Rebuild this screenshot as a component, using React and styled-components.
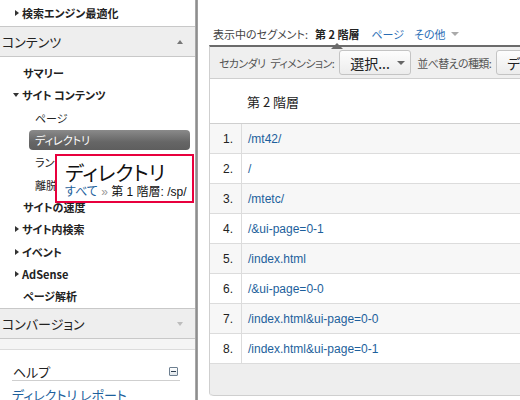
import React from "react";
import styled, { createGlobalStyle, css } from "styled-components";

const GlobalStyle = createGlobalStyle`
  html, body { margin: 0; padding: 0; background: #fff; }
  body {
    width: 520px; height: 400px; overflow: hidden;
    font-family: "Noto Sans CJK JP", "Liberation Sans", sans-serif;
    font-feature-settings: "palt";
    color: #222;
  }
`;

const Page = styled.div`
  display: flex;
  width: 520px;
  height: 400px;
  overflow: hidden;
`;

const Sidebar = styled.div`
  position: relative;
  width: 195px;
  flex-shrink: 0;
  overflow: hidden;
`;

const Splitter = styled.div`
  width: 3px;
  flex-shrink: 0;
  background: linear-gradient(to right, #b5b5b5, #8e8e8e, #a8a8a8);
`;

const TopItem = styled.div`
  box-sizing: border-box;
  height: 27px;
  border-bottom: 1px solid #c8c8c8;
  display: flex;
  align-items: center;
  padding-left: 15px;
  font-size: 11px;
  font-weight: 700;
  line-height: 14px;
`;

const Tri = styled.span`
  display: inline-block;
  width: 0;
  height: 0;
  margin-right: 3px;
  ${(p) =>
    p.$dir === "down"
      ? css`
          border-left: 3px solid transparent;
          border-right: 3px solid transparent;
          border-top: 4px solid #333;
        `
      : css`
          border-top: 3px solid transparent;
          border-bottom: 3px solid transparent;
          border-left: 4px solid #333;
        `}
`;

const SectionHeader = styled.div`
  box-sizing: border-box;
  height: ${(p) => (p.$top ? 31 : 30)}px;
  background: #eeeeee;
  border-bottom: 1px solid #c8c8c8;
  ${(p) => p.$top && css`border-top: 1px solid #c8c8c8;`}
  display: flex;
  align-items: center;
  justify-content: space-between;
  padding: 0 12px 0 2px;
  font-size: 13px;
  color: #222;
`;

const HeaderArrow = styled.span`
  width: 0;
  height: 0;
  border-left: 3px solid transparent;
  border-right: 3px solid transparent;
  ${(p) =>
    p.$up
      ? css`border-bottom: 4px solid #777;`
      : css`border-top: 4px solid #bdbdbd;`}
`;

const NavList = styled.div`
  padding: 5px 0 1px;
`;

const Item = styled.div`
  height: 22.3px;
  display: flex;
  align-items: center;
  padding-left: ${(p) => p.$indent}px;
  font-size: 11px;
  line-height: 14px;
  font-weight: ${(p) => (p.$bold ? 700 : 400)};
  color: #222;
  white-space: nowrap;
`;

const SelectedLabel = styled.span`
  box-sizing: border-box;
  width: 161px;
  height: 20px;
  display: flex;
  align-items: center;
  padding-left: 6px;
  border-radius: 4px;
  background: linear-gradient(to bottom, #8a8a8a, #666 60%, #5e5e5e);
  color: #fff;
`;

const Spacer = styled.div`
  box-sizing: border-box;
  height: 11px;
  background: #f5f5f5;
  border-bottom: 1px solid #dcdcdc;
`;

const Help = styled.div`
  padding: 12px 15px 0 12px;
`;

const HelpTitle = styled.div`
  box-sizing: border-box;
  height: 19px;
  border-bottom: 1px solid #cfcfcf;
  display: flex;
  align-items: center;
  justify-content: space-between;
  padding-left: 1px;
  font-size: 13px;
  color: #222;
`;

const MinusBox = styled.span`
  box-sizing: border-box;
  width: 9px;
  height: 9px;
  margin-right: 2px;
  border: 1px solid #6d7f90;
  border-radius: 1px;
  background: linear-gradient(#fff, #dfe5ea);
  display: flex;
  align-items: center;
  justify-content: center;
  &::after {
    content: "";
    width: 5px;
    height: 1px;
    background: #2c3e50;
  }
`;

const HelpLink = styled.div`
  margin-top: 5px;
  font-size: 13px;
  line-height: 18px;
  color: #1d5f9c;
  white-space: nowrap;
`;

const Popup = styled.div`
  position: absolute;
  left: 55px;
  top: 154px;
  width: 139px;
  height: 49px;
  box-sizing: border-box;
  border: 2px solid #e8003d;
  background: #fff;
  padding: 5px 8px 0;
`;

const PopupTitle = styled.div`
  font-size: 20px;
  line-height: 24px;
  color: #111;
`;

const PopupPath = styled.div`
  font-size: 12px;
  line-height: 15px;
  color: #111;
  white-space: nowrap;
  font-family: "Liberation Sans", "Noto Sans CJK JP", sans-serif;
`;

const Blue = styled.span`
  color: ${(p) => p.$color || "#1d5f9c"};
`;

const Main = styled.div`
  flex: 1;
  min-width: 0;
  padding-left: 11px;
  overflow: hidden;
`;

const SegmentBar = styled.div`
  height: 45px;
  box-sizing: border-box;
  padding: 23px 0 0 4px;
  display: flex;
  align-items: center;
  font-size: 11px;
  line-height: 16px;
  color: #444;
  white-space: nowrap;
`;

const SegLabel = styled.span`
  margin-right: 7px;
`;

const SegActive = styled.span`
  position: relative;
  font-weight: 700;
  color: #222;
  margin-right: 12px;
  &::after {
    content: "";
    position: absolute;
    left: 50%;
    margin-left: -6px;
    bottom: -7px;
    border-left: 6px solid transparent;
    border-right: 6px solid transparent;
    border-bottom: 6px solid #6b6b6b;
  }
`;

const SegLink = styled.span`
  color: #2a6db5;
  margin-right: 10px;
  display: inline-flex;
  align-items: center;
`;

const SmallDown = styled.span`
  margin-left: 5px;
  width: 0;
  height: 0;
  border-left: 4px solid transparent;
  border-right: 4px solid transparent;
  border-top: 4px solid #aaa;
`;

const Toolbar = styled.div`
  box-sizing: border-box;
  height: 34px;
  width: 340px;
  border-top: 2px solid #6b6b6b;
  border-left: 1px solid #cfcfcf;
  border-bottom: 1px solid #cfcfcf;
  background: #efefef;
  display: flex;
  align-items: center;
  padding-left: 9px;
  font-size: 11px;
  color: #555;
  white-space: nowrap;
`;

const ToolLabel = styled.span`
  margin-right: 5px;
  letter-spacing: -0.6px;
  word-spacing: 3px;
`;

const SelectButton = styled.span`
  box-sizing: border-box;
  flex-shrink: 0;
  height: 25px;
  width: ${(p) => p.$w}px;
  border: 1px solid #c4c4c4;
  border-radius: 3px;
  background: linear-gradient(#fdfdfd, #ececec);
  display: flex;
  align-items: center;
  padding-left: 10px;
  margin-right: 6px;
  font-size: 14px;
  color: #222;
`;

const BtnArrow = styled.span`
  margin-left: 7px;
  width: 0;
  height: 0;
  border-left: 4px solid transparent;
  border-right: 4px solid transparent;
  border-top: 4px solid #666;
`;

const Table = styled.div`
  width: 340px;
  border-left: 1px solid #cfcfcf;
  border-bottom-left-radius: 4px;
  overflow: hidden;
`;

const HeadRow = styled.div`
  box-sizing: border-box;
  height: 45px;
  border-bottom: 1px solid #cfcfcf;
  display: flex;
  align-items: center;
  padding-left: 37px;
  font-size: 13px;
  color: #222;
`;

const Row = styled.div`
  box-sizing: border-box;
  height: 30px;
  display: grid;
  grid-template-columns: 32px 1fr;
  border-bottom: 1px solid #dcdcdc;
  background: ${(p) => (p.$odd ? "#f7f7f7" : "#fff")};
  font-family: "Liberation Sans", sans-serif;
  font-size: 12px;
`;

const NumCell = styled.div`
  border-right: 1px solid #dcdcdc;
  display: flex;
  align-items: center;
  justify-content: flex-end;
  padding-right: 8px;
  color: #222;
`;

const LinkCell = styled.div`
  display: flex;
  align-items: center;
  padding-left: 6px;
  color: #1d5f9c;
  white-space: nowrap;
`;

const Footer = styled.div`
  box-sizing: border-box;
  height: 32px;
  background: #eeeeee;
  border-bottom: 1px solid #cfcfcf;
  border-bottom-left-radius: 4px;
`;

const rows = [
  "/mt42/",
  "/",
  "/mtetc/",
  "/&ui-page=0-1",
  "/index.html",
  "/&ui-page=0-0",
  "/index.html&ui-page=0-0",
  "/index.html&ui-page=0-1",
];

const nav = [
  { t: "サマリー", indent: 23, bold: true },
  { t: "サイト コンテンツ", indent: 13, bold: true, tri: "down" },
  { t: "ページ", indent: 35 },
  { t: "ディレクトリ", indent: 29, selected: true },
  { t: "ランディング ページ", indent: 35 },
  { t: "離脱ページ", indent: 35 },
  { t: "サイトの速度", indent: 23, bold: true },
  { t: "サイト内検索", indent: 15, bold: true, tri: "right" },
  { t: "イベント", indent: 15, bold: true, tri: "right" },
  { t: "AdSense", indent: 15, bold: true, tri: "right" },
  { t: "ページ解析", indent: 23, bold: true },
];

export default function App() {
  return (
    <>
      <GlobalStyle />
      <Page>
        <Sidebar>
          <TopItem>
            <Tri $dir="right" />
            検索エンジン最適化
          </TopItem>
          <SectionHeader>
            コンテンツ
            <HeaderArrow $up />
          </SectionHeader>
          <NavList>
            {nav.map((n) => (
              <Item key={n.t} $indent={n.indent} $bold={n.bold}>
                {n.tri && <Tri $dir={n.tri} />}
                {n.selected ? <SelectedLabel>{n.t}</SelectedLabel> : n.t}
              </Item>
            ))}
          </NavList>
          <SectionHeader $top>
            コンバージョン
            <HeaderArrow />
          </SectionHeader>
          <Spacer />
          <Help>
            <HelpTitle>
              ヘルプ
              <MinusBox />
            </HelpTitle>
            <HelpLink>ディレクトリ レポート</HelpLink>
          </Help>
          <Popup>
            <PopupTitle>ディレクトリ</PopupTitle>
            <PopupPath>
              <Blue>すべて</Blue> <Blue $color="#999">»</Blue> 第 1 階層: /sp/
            </PopupPath>
          </Popup>
        </Sidebar>
        <Splitter />
        <Main>
          <SegmentBar>
            <SegLabel>表示中のセグメント:</SegLabel>
            <SegActive>第 2 階層</SegActive>
            <SegLink>ページ</SegLink>
            <SegLink>
              その他
              <SmallDown />
            </SegLink>
          </SegmentBar>
          <Toolbar>
            <ToolLabel>セカンダリ ディメンション:</ToolLabel>
            <SelectButton $w={72}>
              選択...
              <BtnArrow />
            </SelectButton>
            <ToolLabel>並べ替えの種類:</ToolLabel>
            <SelectButton $w={60}>デフォルト</SelectButton>
          </Toolbar>
          <Table>
            <HeadRow>第 2 階層</HeadRow>
            {rows.map((r, i) => (
              <Row key={i} $odd={i % 2 === 0}>
                <NumCell>{i + 1}.</NumCell>
                <LinkCell>{r}</LinkCell>
              </Row>
            ))}
            <Footer />
          </Table>
        </Main>
      </Page>
    </>
  );
}
